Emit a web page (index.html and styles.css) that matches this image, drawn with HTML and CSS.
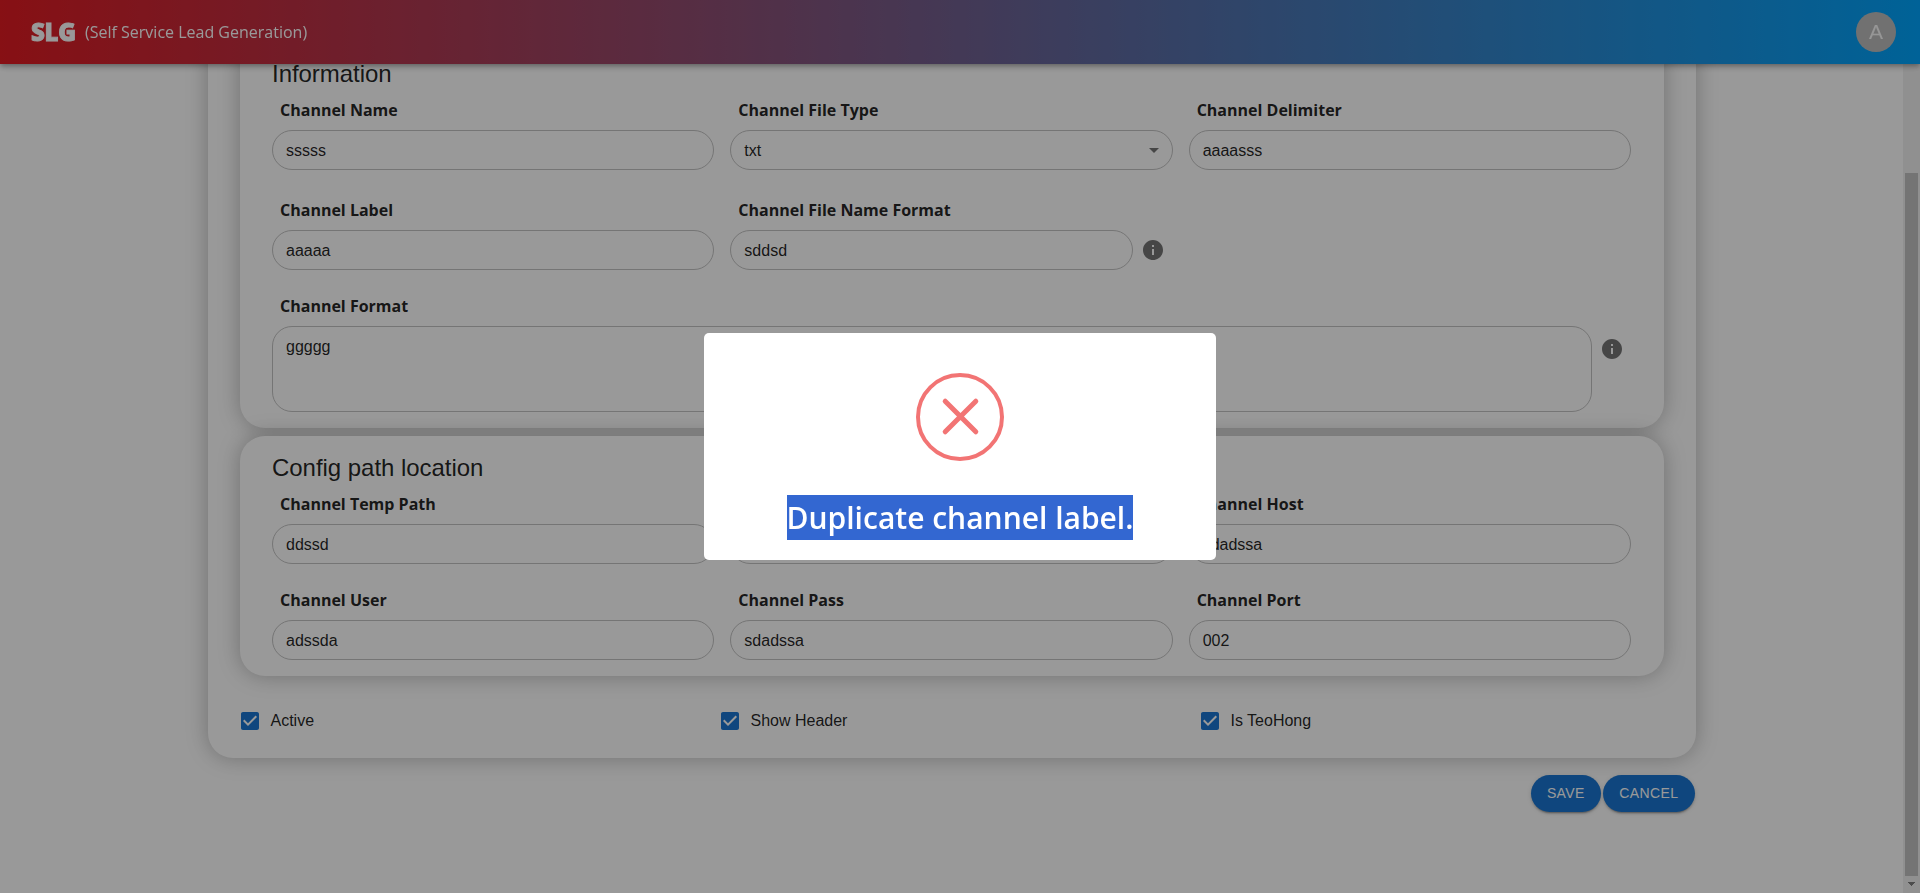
FILE: index.html
```html
<!DOCTYPE html>
<html lang="en">
<head>
<meta charset="utf-8">
<title>SLG</title>
<link rel="stylesheet" href="styles.css">
</head>
<body>
<header class="topbar">
  <span class="brand">SLG</span>
  <span class="tagline">(Self Service Lead Generation)</span>
  <span class="avatar">A</span>
</header>
<div class="viewport">
  <main class="page">
    <div class="card">
      <section class="panel panel-info">
        <h2 class="panel-title">Information</h2>
        <div class="grid">
          <div class="field"><label class="label">Channel Name</label><div class="input">sssss</div></div>
          <div class="field"><label class="label">Channel File Type</label><div class="input select">txt<svg class="caret" viewBox="0 0 24 24"><path d="M7 10l5 5 5-5z"/></svg></div></div>
          <div class="field"><label class="label">Channel Delimiter</label><div class="input">aaaasss</div></div>
        </div>
        <div class="grid grid-second">
          <div class="field"><label class="label">Channel Label</label><div class="input">aaaaa</div></div>
          <div class="field"><label class="label">Channel File Name Format</label>
            <div class="with-info"><div class="input">sddsd</div><svg class="info" viewBox="0 0 24 24"><path d="M12 2C6.48 2 2 6.48 2 12s4.48 10 10 10 10-4.48 10-10S17.52 2 12 2zm1 15h-2v-6h2v6zm0-8h-2V7h2v2z"/></svg></div>
          </div>
        </div>
        <div class="field field-wide"><label class="label">Channel Format</label>
          <div class="with-info"><div class="input area">ggggg</div><svg class="info info-top" viewBox="0 0 24 24"><path d="M12 2C6.48 2 2 6.48 2 12s4.48 10 10 10 10-4.48 10-10S17.52 2 12 2zm1 15h-2v-6h2v6zm0-8h-2V7h2v2z"/></svg></div>
        </div>
      </section>
      <section class="panel">
        <h2 class="panel-title">Config path location</h2>
        <div class="grid">
          <div class="field"><label class="label">Channel Temp Path</label><div class="input">ddssd</div></div>
          <div class="field"><label class="label">&nbsp;</label><div class="input"></div></div>
          <div class="field"><label class="label">Channel Host</label><div class="input">sdadssa</div></div>
          <div class="field"><label class="label">Channel User</label><div class="input">adssda</div></div>
          <div class="field"><label class="label">Channel Pass</label><div class="input">sdadssa</div></div>
          <div class="field"><label class="label">Channel Port</label><div class="input">002</div></div>
        </div>
      </section>
      <div class="checks">
        <div class="check"><svg class="box" viewBox="0 0 24 24"><path d="M19 3H5c-1.11 0-2 .9-2 2v14c0 1.1.89 2 2 2h14c1.11 0 2-.9 2-2V5c0-1.1-.89-2-2-2zm-9 14l-5-5 1.41-1.41L10 14.17l7.59-7.59L19 8l-9 9z"/></svg>Active</div>
        <div class="check"><svg class="box" viewBox="0 0 24 24"><path d="M19 3H5c-1.11 0-2 .9-2 2v14c0 1.1.89 2 2 2h14c1.11 0 2-.9 2-2V5c0-1.1-.89-2-2-2zm-9 14l-5-5 1.41-1.41L10 14.17l7.59-7.59L19 8l-9 9z"/></svg>Show Header</div>
        <div class="check"><svg class="box" viewBox="0 0 24 24"><path d="M19 3H5c-1.11 0-2 .9-2 2v14c0 1.1.89 2 2 2h14c1.11 0 2-.9 2-2V5c0-1.1-.89-2-2-2zm-9 14l-5-5 1.41-1.41L10 14.17l7.59-7.59L19 8l-9 9z"/></svg>Is TeoHong</div>
      </div>
    </div>
    <div class="actions"><button class="btn">SAVE</button><button class="btn">CANCEL</button></div>
  </main>
  <div class="scrollbar"><div class="thumb"></div><svg class="arrow" viewBox="0 0 17 17"><path d="M5 6h7v1h-1v1h-1v1H9v1H8V9H7V8H6V7H5z"/></svg></div>
</div>
<div class="overlay">
  <div class="modal">
    <svg class="error-icon" viewBox="0 0 88 88"><circle cx="44" cy="44" r="42"/><path d="M29.2 28.2l30.6 30.6M59.8 28.2L29.2 58.8"/></svg>
    <h2 class="modal-title"><span class="selected">Duplicate channel label.</span></h2>
  </div>
</div>
</body>
</html>
```
FILE: styles.css
```css
* { box-sizing: border-box; }
body {
  margin: 0;
  height: 893px;
  overflow: hidden;
  background: #fff;
  color: rgba(0, 0, 0, 0.87);
  font-family: "Liberation Sans", Arial, sans-serif;
  font-size: 16px;
}
.topbar {
  position: fixed;
  inset: 0 0 auto 0;
  z-index: 2;
  height: 64px;
  padding: 0 24px 0 31px;
  display: flex;
  align-items: center;
  color: #fff;
  font-family: "Open Sans", sans-serif;
  background: linear-gradient(90deg, #e11b22, #00a4fd);
  box-shadow: 0 2px 4px -1px rgba(0,0,0,.2), 0 4px 5px rgba(0,0,0,.14), 0 1px 10px rgba(0,0,0,.12);
}
.brand {
  width: 54px;
  font-size: 24px;
  font-weight: 800;
  line-height: 64px;
  height: 64px;
  letter-spacing: -0.3px;
  -webkit-text-stroke: 0.9px #fff;
}
.tagline { flex: 1; font-size: 16px; }
.avatar {
  width: 40px;
  height: 40px;
  border-radius: 50%;
  background: #bdbdbd;
  color: #fafafa;
  font-family: "Liberation Sans", Arial, sans-serif;
  font-size: 21px;
  display: flex;
  align-items: center;
  justify-content: center;
}
.viewport { display: flex; height: 893px; overflow: hidden; }
.page { flex: 1; min-width: 0; padding: 0 207px 0 208px; }
.card {
  margin-top: -100px;
  padding: 134px 32px 22px;
  border-radius: 25px;
  box-shadow: 0 0 22px rgba(0, 0, 0, 0.27);
  background: #fff;
}
.panel {
  padding: 16px 33px 16px 32px;
  border-radius: 25px;
  background: #fff;
  box-shadow: 0 0 22px rgba(0, 0, 0, 0.27);
}
.panel-info { padding-top: 24px; margin-bottom: 8px; }
.panel-title { margin: 0 0 8px; font-size: 24px; line-height: 32px; font-weight: 400; letter-spacing: -0.04px; }
.grid { display: grid; grid-template-columns: repeat(3, 1fr); gap: 24px 16px; }
.grid-second { margin-top: 28px; }
.field-wide { margin-top: 24px; margin-right: -1px; }
.label {
  display: block;
  padding-left: 8px;
  margin-bottom: 8px;
  font-family: "Open Sans", sans-serif;
  font-weight: 700;
  line-height: 24px;
}
.input {
  flex: 1;
  height: 40px;
  padding: 0 13px;
  border: 1px solid #c4c4c4;
  border-radius: 20px;
  line-height: 39px;
}
.select { display: flex; justify-content: space-between; align-items: center; padding-right: 6px; }
.caret { width: 24px; height: 24px; fill: #757575; }
.with-info { display: flex; align-items: center; padding-right: 8px; gap: 8px; }
.info { width: 24px; height: 24px; fill: #757575; }
.info-top { align-self: flex-start; margin-top: 11px; }
.area { height: 86px; line-height: 23px; padding-top: 8px; }
.checks { display: grid; grid-template-columns: repeat(3, 480px); padding-top: 30px; margin-left: -2px; }
.check { display: flex; align-items: center; gap: 8.5px; height: 30px; }
.box { width: 24px; height: 24px; fill: #1976d2; }
.actions { display: flex; justify-content: flex-end; gap: 2px; margin-top: 17px; padding-right: 1px; }
.btn {
  height: 37px;
  padding: 0 16.5px 2px 16px;
  border: 0;
  border-radius: 20px;
  background: #1976d2;
  color: #fff;
  font: 500 14px "Liberation Sans", Arial, sans-serif;
  letter-spacing: 0.4px;
  box-shadow: 0 3px 1px -2px rgba(0,0,0,.2), 0 2px 2px rgba(0,0,0,.14), 0 1px 5px rgba(0,0,0,.12);
}
.scrollbar { flex: none; width: 17px; height: 893px; padding: 173px 2px 0; background: #f1f1f1; }
.thumb { height: 703px; background: #c1c1c1; }
.arrow { display: block; width: 17px; height: 17px; margin-left: -2px; fill: #7f7f7f; shape-rendering: crispEdges; }
.overlay {
  position: fixed;
  inset: 0;
  z-index: 3;
  display: flex;
  align-items: center;
  justify-content: center;
  background: rgba(0, 0, 0, 0.4);
}
.modal {
  width: 512px;
  height: 227px;
  padding-top: 40px;
  border-radius: 5px;
  background: #fff;
  display: flex;
  flex-direction: column;
  align-items: center;
}
.error-icon { width: 88px; height: 88px; fill: none; stroke: #f27474; stroke-width: 4; }
.error-icon path { stroke-width: 5; stroke-linecap: round; }
.modal-title {
  margin: 34px 0 0;
  font: 600 30px/45px "Open Sans", sans-serif;
  color: #fff;
}
.selected { display: block; background: #3367d1; }
```
